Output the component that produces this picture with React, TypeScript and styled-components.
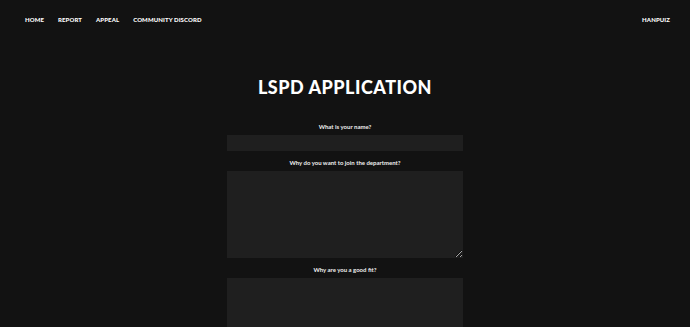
import React from "react";
import styled, { createGlobalStyle } from "styled-components";

const Global = createGlobalStyle`
  html, body { margin: 0; padding: 0; background: #121212; }
  body { font-family: Lato, "Open Sans", sans-serif; color: #fff; }
  * { box-sizing: border-box; }
`;

const Page = styled.div`
  min-height: 327px;
  background: #121212;
`;

const Nav = styled.nav`
  display: flex;
  justify-content: space-between;
  align-items: center;
  padding: 7px 20px 0 25px;
  height: 31px;
`;

const NavLinks = styled.div`
  display: flex;
  gap: 14px;
`;

const NavLink = styled.a`
  font-size: 6px;
  font-weight: 900;
  letter-spacing: 0.1px;
  color: #fff;
  text-decoration: none;
  text-transform: uppercase;
`;

const Main = styled.main`
  display: flex;
  flex-direction: column;
  align-items: center;
`;

const Title = styled.h1`
  margin: 45px 0 25px;
  font-size: 18px;
  line-height: 22px;
  font-weight: 900;
  letter-spacing: 0.5px;
`;

const Form = styled.form`
  width: 236px;
  display: flex;
  flex-direction: column;
  align-items: stretch;
`;

const Label = styled.label`
  display: block;
  text-align: center;
  font-size: 6px;
  line-height: 8px;
  font-weight: 700;
  color: #eee;
  margin-bottom: 4px;
`;

const Field = styled.div`
  margin-bottom: 8px;
`;

const Input = styled.input`
  display: block;
  width: 100%;
  height: 16px;
  border: none;
  background: #1f1f1f;
  outline: none;
  color: #fff;
`;

const Area = styled.textarea`
  display: block;
  width: 100%;
  height: 87px;
  border: none;
  background: #1f1f1f;
  outline: none;
  color: #fff;
  margin: 0;
`;

export default function App() {
  return (
    <Page>
      <Global />
      <Nav>
        <NavLinks>
          <NavLink>Home</NavLink>
          <NavLink>Report</NavLink>
          <NavLink>Appeal</NavLink>
          <NavLink>Community Discord</NavLink>
        </NavLinks>
        <NavLink>Hanpuiz</NavLink>
      </Nav>
      <Main>
        <Title>LSPD APPLICATION</Title>
        <Form>
          <Field>
            <Label>What is your name?</Label>
            <Input />
          </Field>
          <Field>
            <Label>Why do you want to join the department?</Label>
            <Area />
          </Field>
          <Field>
            <Label>Why are you a good fit?</Label>
            <Area />
          </Field>
        </Form>
      </Main>
    </Page>
  );
}
